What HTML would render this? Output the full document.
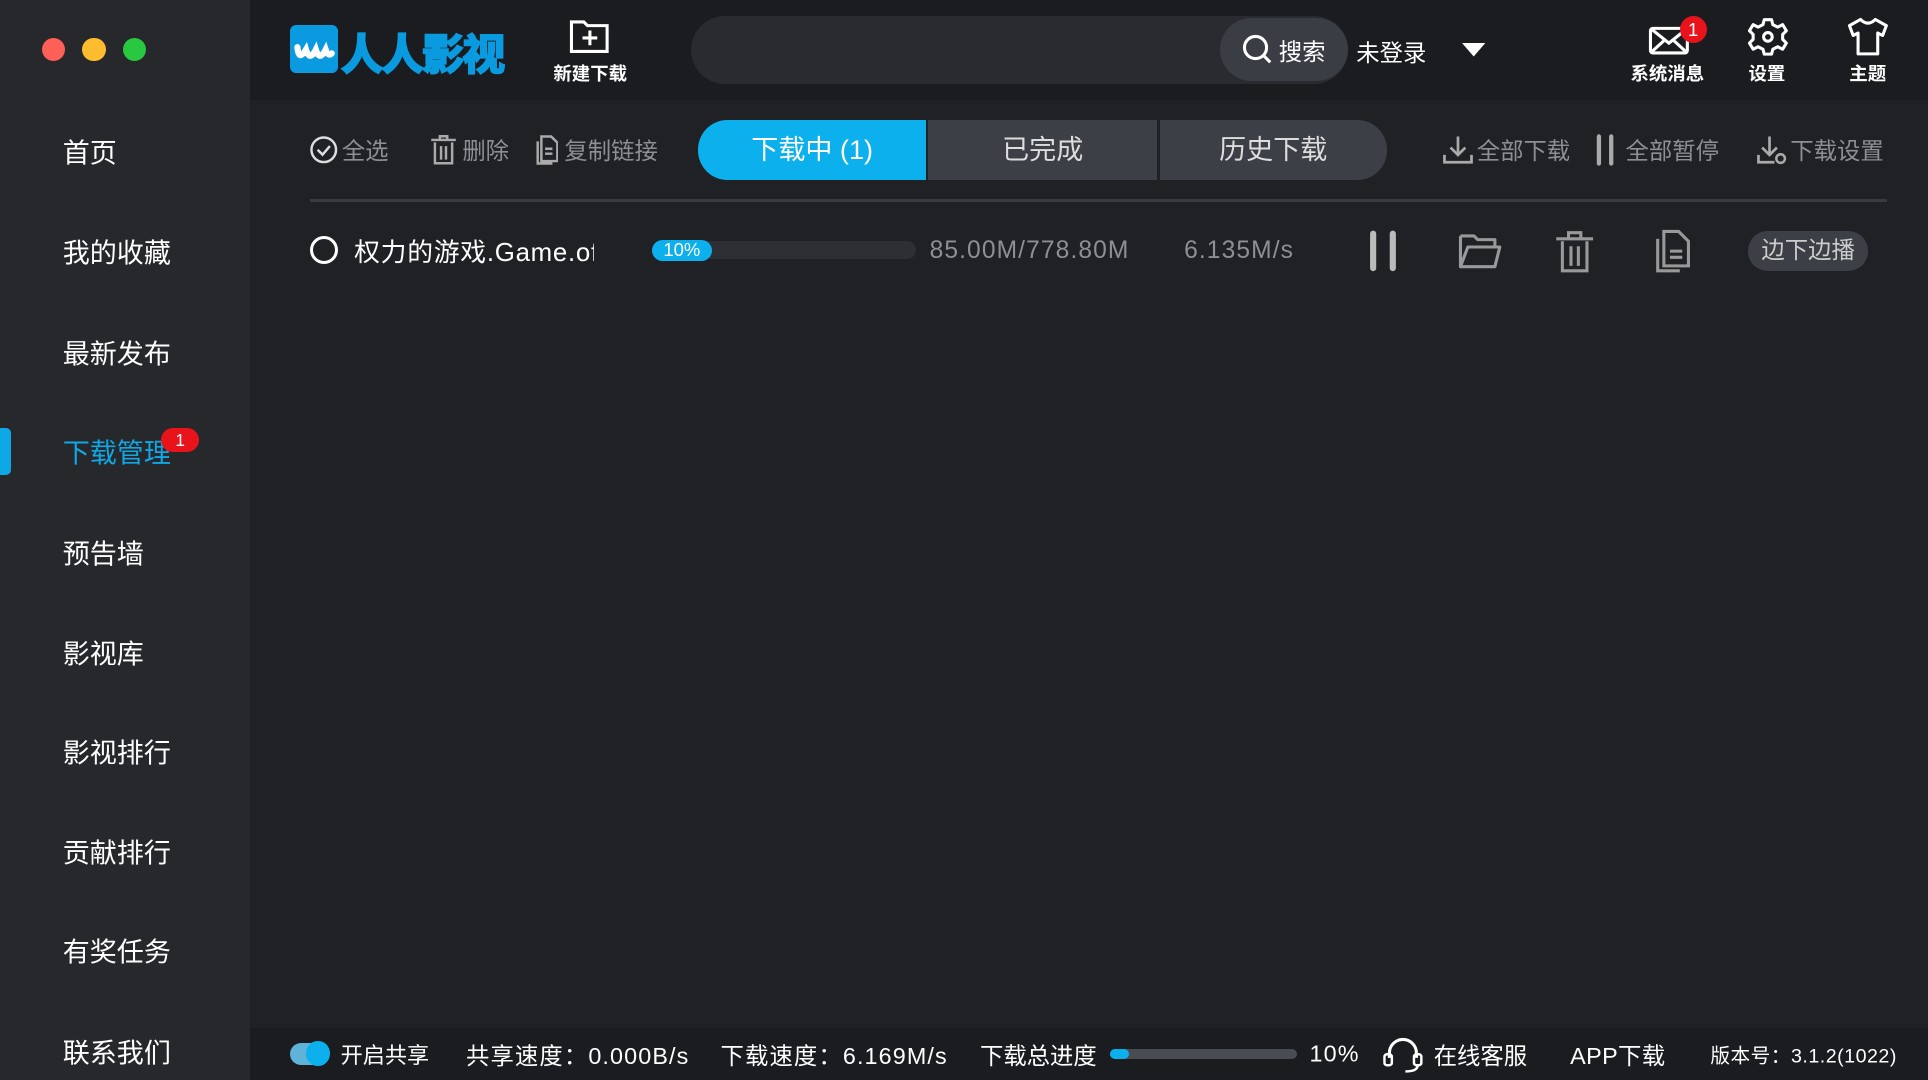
<!DOCTYPE html>
<html><head><meta charset="utf-8"><style>
html,body{margin:0;padding:0;background:#1b1c1f;overflow:hidden;width:1928px;height:1080px}
#w{zoom:1.22959;width:1568px;height:878px;position:relative;font-family:"Liberation Sans","Noto Sans CJK SC",sans-serif;color:#fff;background:#202125;overflow:hidden}
.a{position:absolute;white-space:nowrap}
#side{left:0;top:0;width:203px;height:878px;background:#27282c}
#head{left:203px;top:0;width:1365px;height:81px;background:#1b1c1f}
#foot{left:203px;top:836px;width:1365px;height:42px;background:#1b1c1f}
.nav{left:51px;font-size:22px;transform:translateY(-50%)}
.dot{width:19px;height:19px;border-radius:50%;top:31px}
.g{color:#8e8f94;font-size:19px;transform:translateY(-50%)}
.f{font-size:18px;top:857px;transform:translateY(-50%)}
.n{letter-spacing:0.9px}
.lbl{font-size:15px;font-weight:bold;transform:translate(-50%,-50%);top:59px}
.tab{font-size:22px;text-align:center;line-height:50px}
</style></head><body><div id="w">
<div class="a" id="side"></div>
<div class="a" id="head"></div>
<div class="a" id="foot"></div>
<div class="a dot" style="left:34px;background:#fe5f57"></div>
<div class="a dot" style="left:67px;background:#febc2e"></div>
<div class="a dot" style="left:100px;background:#28c840"></div>

<div class="a nav" style="top:123px">首页</div>
<div class="a nav" style="top:204px">我的收藏</div>
<div class="a nav" style="top:286px">最新发布</div>
<div class="a" style="left:0;top:348px;width:9px;height:38px;background:#0fa8e6;border-radius:0 4px 4px 0"></div>
<div class="a nav" style="top:367px;color:#0fa8e6">下载管理</div>
<div class="a" style="left:131px;top:348px;width:31px;height:20px;border-radius:10px;background:#e8131b;font-size:14px;text-align:center;line-height:20px">1</div>
<div class="a nav" style="top:449px">预告墙</div>
<div class="a nav" style="top:530px">影视库</div>
<div class="a nav" style="top:611px">影视排行</div>
<div class="a nav" style="top:692px">贡献排行</div>
<div class="a nav" style="top:773px">有奖任务</div>
<div class="a nav" style="top:855px">联系我们</div>

<!-- logo -->
<div class="a" style="left:236px;top:20px;width:39px;height:39px;background:#0a9ae0;border-radius:5px"></div>
<svg class="a" style="left:236px;top:20px" width="39" height="39"><path d="M6 18 q1 12 7 2 q3 10 8 0 q3 10 8 0 q2 6 5 3" stroke="#fff" stroke-width="5" fill="none" stroke-linecap="round"/></svg>
<div class="a" style="left:277px;top:17px;font-size:35px;font-weight:900;color:#0a9ae0;letter-spacing:-2px;-webkit-text-stroke:1px #0a9ae0">人人影视</div>
<svg class="a" style="left:463px;top:14px" width="34" height="30"><path d="M2 4 h10 l3 3 h16 v21 h-29z" stroke="#fff" stroke-width="2.5" fill="none"/><path d="M17 11v12M11 17h12" stroke="#fff" stroke-width="2.5"/></svg>
<div class="a lbl" style="left:480px">新建下载</div>

<div class="a" style="left:562px;top:13px;width:534px;height:55px;border-radius:28px;background:#2a2b30"></div>
<div class="a" style="left:992px;top:15px;width:104px;height:51px;border-radius:26px;background:#3b3d45"></div>
<svg class="a" style="left:1010px;top:28px" width="26" height="26"><circle cx="11" cy="11" r="9" stroke="#fff" stroke-width="2.5" fill="none"/><path d="M18 18l5 5" stroke="#fff" stroke-width="2.5"/></svg>
<div class="a" style="left:1040px;top:27px;font-size:19px">搜索</div>
<div class="a" style="left:1103px;top:28px;font-size:19px">未登录</div>
<svg class="a" style="left:1189px;top:35px" width="19" height="12"><path d="M0 0h19l-9.5 11z" fill="#fff"/></svg>

<svg class="a" style="left:1340px;top:17px" width="36" height="28"><rect x="2" y="6" width="30" height="20" rx="2" stroke="#fff" stroke-width="2.5" fill="none"/><path d="M2 6l15 12l15-12M2 26l11-10M32 26l-11-10" stroke="#fff" stroke-width="2.5" fill="none"/></svg>
<div class="a" style="left:1366px;top:13px;width:22px;height:22px;border-radius:50%;background:#e8131b;font-size:15px;text-align:center;line-height:22px">1</div>
<div class="a lbl" style="left:1356px">系统消息</div>
<svg class="a" style="left:1421px;top:13px" width="34" height="34" viewBox="0 0 34 34"><path d="M14 3h6l1 4 4 2 4-2 3 5-3 3v4l3 3-3 5-4-2-4 2-1 4h-6l-1-4-4-2-4 2-3-5 3-3v-4l-3-3 3-5 4 2 4-2z" stroke="#fff" stroke-width="2.5" fill="none" stroke-linejoin="round"/><circle cx="17" cy="17" r="3.5" stroke="#fff" stroke-width="2.5" fill="none"/></svg>
<div class="a lbl" style="left:1437px">设置</div>
<svg class="a" style="left:1502px;top:14px" width="34" height="32"><path d="M11 2 q6 6 12 0 l9 5 -3 8 -4-2 v17 h-16 v-17 l-4 2 -3-8z" stroke="#fff" stroke-width="2.5" fill="none" stroke-linejoin="round"/></svg>
<div class="a lbl" style="left:1519px">主题</div>

<!-- toolbar -->
<svg class="a" style="left:251px;top:110px" width="24" height="24"><circle cx="12" cy="12" r="10" stroke="#ddd" stroke-width="2" fill="none"/><path d="M7 12l4 4 6-7" stroke="#ddd" stroke-width="2" fill="none"/></svg>
<div class="a g" style="left:278px;top:121px">全选</div>
<svg class="a" style="left:350px;top:110px" width="22" height="24"><path d="M1 4h20M8 4V1h6v3M4 6v17h14V6M9 9v11M13 9v11" stroke="#aaa" stroke-width="2" fill="none"/></svg>
<div class="a g" style="left:376px;top:121px">删除</div>
<svg class="a" style="left:434px;top:109px" width="20" height="26"><path d="M6 2h8l5 5v15h-13z M3 6v18h12" stroke="#aaa" stroke-width="2" fill="none"/><path d="M9 12h6M9 16h6" stroke="#aaa" stroke-width="2"/></svg>
<div class="a g" style="left:459px;top:121px">复制链接</div>

<div class="a tab" style="left:568px;top:98px;width:185px;height:48px;border-radius:24px 0 0 24px;background:#0bb0ec">下载中 (1)</div>
<div class="a tab" style="left:755px;top:98px;width:186px;height:48px;background:#3d3f47;color:#ddd">已完成</div>
<div class="a tab" style="left:943px;top:98px;width:185px;height:48px;border-radius:0 24px 24px 0;background:#3d3f47;color:#ddd">历史下载</div>

<svg class="a" style="left:1173px;top:109px" width="26" height="26"><path d="M13 2v15M7 11l6 6 6-6M2 17v6h22v-6" stroke="#aaa" stroke-width="2.2" fill="none"/></svg>
<div class="a g" style="left:1201px;top:121px">全部下载</div>
<svg class="a" style="left:1296px;top:109px" width="18" height="26"><path d="M4 2v22M14 2v22" stroke="#aaa" stroke-width="3.5" stroke-linecap="round"/></svg>
<div class="a g" style="left:1322px;top:121px">全部暂停</div>
<svg class="a" style="left:1428px;top:109px" width="26" height="26"><path d="M11 2v15M5 11l6 6 6-6M2 17v6h13" stroke="#aaa" stroke-width="2.2" fill="none"/><circle cx="20" cy="20" r="3.5" stroke="#aaa" stroke-width="2" fill="none"/></svg>
<div class="a g" style="left:1456px;top:121px">下载设置</div>

<div class="a" style="left:252px;top:162px;width:1283px;height:2px;background:#3a3b40"></div>

<!-- row -->
<div class="a" style="left:252px;top:192px;width:18px;height:18px;border-radius:50%;border:2.5px solid #fff"></div>
<div class="a n" style="left:288px;top:189px;width:195px;overflow:hidden;font-size:21px;letter-spacing:0.6px">权力的游戏.Game.of.Thrones</div>
<div class="a" style="left:530px;top:196px;width:215px;height:15px;border-radius:8px;background:#2e2f34"></div>
<div class="a" style="left:530px;top:195px;width:49px;height:17px;border-radius:9px;background:#0bb0ec;font-size:15px;text-align:center;line-height:17px">10%</div>
<div class="a g n" style="left:756px;top:204px;font-size:20px">85.00M/778.80M</div>
<div class="a g n" style="left:963px;top:204px;font-size:20px">6.135M/s</div>
<svg class="a" style="left:1112px;top:187px" width="26" height="34"><path d="M5 3v28M21 3v28" stroke="#bbb" stroke-width="5" stroke-linecap="round"/></svg>
<svg class="a" style="left:1186px;top:188px" width="36" height="32"><path d="M2 4h11l3 3h14v6M2 4v25h28l4-16h-26l-6 16" stroke="#999" stroke-width="2.5" fill="none" stroke-linejoin="round"/></svg>
<svg class="a" style="left:1265px;top:186px" width="32" height="36"><path d="M1 8h30M11 8V3h10v5M6 10v24h20V10M13 14v16M19 14v16" stroke="#999" stroke-width="2.5" fill="none"/></svg>
<svg class="a" style="left:1345px;top:186px" width="30" height="36"><path d="M8 2h12l8 8v20h-20z M3 8v26h18" stroke="#999" stroke-width="2.5" fill="none"/><path d="M13 18h10M13 23h10" stroke="#999" stroke-width="2.5"/></svg>
<div class="a" style="left:1422px;top:188px;width:97px;height:32px;border-radius:16px;background:#3d3f47;font-size:19px;color:#ccc;text-align:center;line-height:32px">边下边播</div>

<!-- footer -->
<div class="a" style="left:236px;top:848px;width:31px;height:18px;border-radius:9px;background:#5fb3d9"></div>
<div class="a" style="left:249px;top:847px;width:19px;height:20px;border-radius:50%;background:#0bb0ec"></div>
<div class="a f" style="left:277px">开启共享</div>
<div class="a f n" style="left:379px;font-size:19px">共享速度：0.000B/s</div>
<div class="a f n" style="left:586px;font-size:19px">下载速度：6.169M/s</div>
<div class="a f" style="left:797px;font-size:19px">下载总进度</div>
<div class="a" style="left:903px;top:853px;width:152px;height:8px;border-radius:4px;background:#4a4c54"></div>
<div class="a" style="left:903px;top:853px;width:15px;height:8px;border-radius:4px;background:#0bb0ec"></div>
<div class="a f n" style="left:1065px;font-size:19px">10%</div>
<svg class="a" style="left:1124px;top:843px" width="34" height="30"><path d="M6 17v-4a11 11 0 0 1 22 0v4" stroke="#fff" stroke-width="2.5" fill="none"/><rect x="2" y="14" width="6" height="9" rx="2" stroke="#fff" stroke-width="2" fill="none"/><rect x="26" y="14" width="6" height="9" rx="2" stroke="#fff" stroke-width="2" fill="none"/><path d="M29 23q0 5-10 5" stroke="#fff" stroke-width="2" fill="none"/></svg>
<div class="a f" style="left:1166px;font-size:19px">在线客服</div>
<div class="a f n" style="left:1277px;font-size:19px;letter-spacing:0.3px">APP下载</div>
<div class="a f n" style="left:1391px;font-size:16px;letter-spacing:0.4px">版本号：3.1.2(1022)</div>
</div></body></html>
